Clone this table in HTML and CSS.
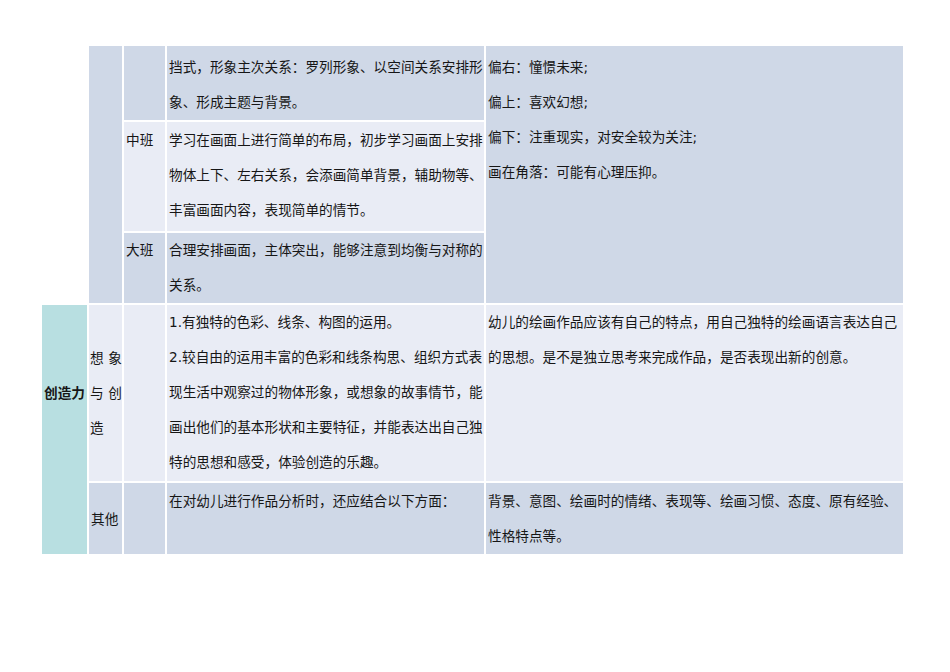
FILE: index.html
```html
<!DOCTYPE html>
<html lang="zh-CN">
<head>
<meta charset="utf-8">
<title>绘画作品分析表</title>
<link rel="stylesheet" href="styles.css">
</head>
<body>
<table class="grid">
  <colgroup>
    <col class="c1"><col class="c2"><col class="c3"><col class="c4"><col class="c5">
  </colgroup>
  <tbody>
    <tr class="r1">
      <td class="blank" rowspan="3"></td>
      <td class="dark" rowspan="3"></td>
      <td class="dark"></td>
      <td class="dark txt">挡式，形象主次关系：罗列形象、以空间关系安排形<br>象、形成主题与背景。</td>
      <td class="dark txt" rowspan="3">偏右：憧憬未来;<br>偏上：喜欢幻想;<br>偏下：注重现实，对安全较为关注;<br>画在角落：可能有心理压抑。</td>
    </tr>
    <tr class="r2">
      <td class="light txt">中班</td>
      <td class="light txt">学习在画面上进行简单的布局，初步学习画面上安排<br>物体上下、左右关系，会添画简单背景，辅助物等、<br>丰富画面内容，表现简单的情节。</td>
    </tr>
    <tr class="r3">
      <td class="dark txt">大班</td>
      <td class="dark txt">合理安排画面，主体突出，能够注意到均衡与对称的<br>关系。</td>
    </tr>
    <tr class="r4">
      <td class="teal head" rowspan="2">创造力</td>
      <td class="light mid spread">想象<br>与创<br>造</td>
      <td class="light"></td>
      <td class="light txt">1.有独特的色彩、线条、构图的运用。<br>2.较自由的运用丰富的色彩和线条构思、组织方式表<br>现生活中观察过的物体形象，或想象的故事情节，能<br>画出他们的基本形状和主要特征，并能表达出自己独<br>特的思想和感受，体验创造的乐趣。</td>
      <td class="light txt">幼儿的绘画作品应该有自己的特点，用自己独特的绘画语言表达自己<br>的思想。是不是独立思考来完成作品，是否表现出新的创意。</td>
    </tr>
    <tr class="r5">
      <td class="dark mid">其他</td>
      <td class="dark"></td>
      <td class="dark txt">在对幼儿进行作品分析时，还应结合以下方面：</td>
      <td class="dark txt">背景、意图、绘画时的情绪、表现等、绘画习惯、态度、原有经验、<br>性格特点等。</td>
    </tr>
  </tbody>
</table>
</body>
</html>
```
FILE: styles.css
```css
html, body {
  margin: 0;
  padding: 0;
  background: #ffffff;
}

body {
  font-family: "DejaVu Sans", "Noto Sans CJK SC", sans-serif;
  font-size: 13.65px;
  line-height: 35px;
  color: #161616;
}

.grid {
  margin: 44px 0 0 40px;
  width: 865px;
  table-layout: fixed;
  border-collapse: separate;
  border-spacing: 2px;
  background: #ffffff;
}

.c1 { width: 45px; }
.c2 { width: 33px; }
.c3 { width: 41px; }
.c4 { width: 317px; }
.c5 { width: 417px; }

.grid td {
  padding: 1px 0 0 2px;
  vertical-align: top;
  white-space: nowrap;
  overflow: visible;
}

.grid .r1 td {
  padding-top: 4px;
}

.grid .r3 td,
.grid .r4 td {
  padding-top: 0;
}

.r1 { height: 72px; }
.r2 { height: 109px; }
.r3 { height: 70px; }
.r4 { height: 176px; }
.r5 { height: 70px; }

.dark { background: #cfd8e7; }
.light { background: #e9ecf5; }
.teal { background: #b8dfe1; }
.blank { background: transparent; }

.grid td.head {
  font-weight: bold;
  padding-top: 71px;
  padding-left: 2px;
}

.grid td.mid {
  vertical-align: middle;
}

.grid td.spread {
  white-space: normal;
  text-align: justify;
  text-align-last: justify;
  padding-left: 1px;
  padding-right: 0;
}
```
